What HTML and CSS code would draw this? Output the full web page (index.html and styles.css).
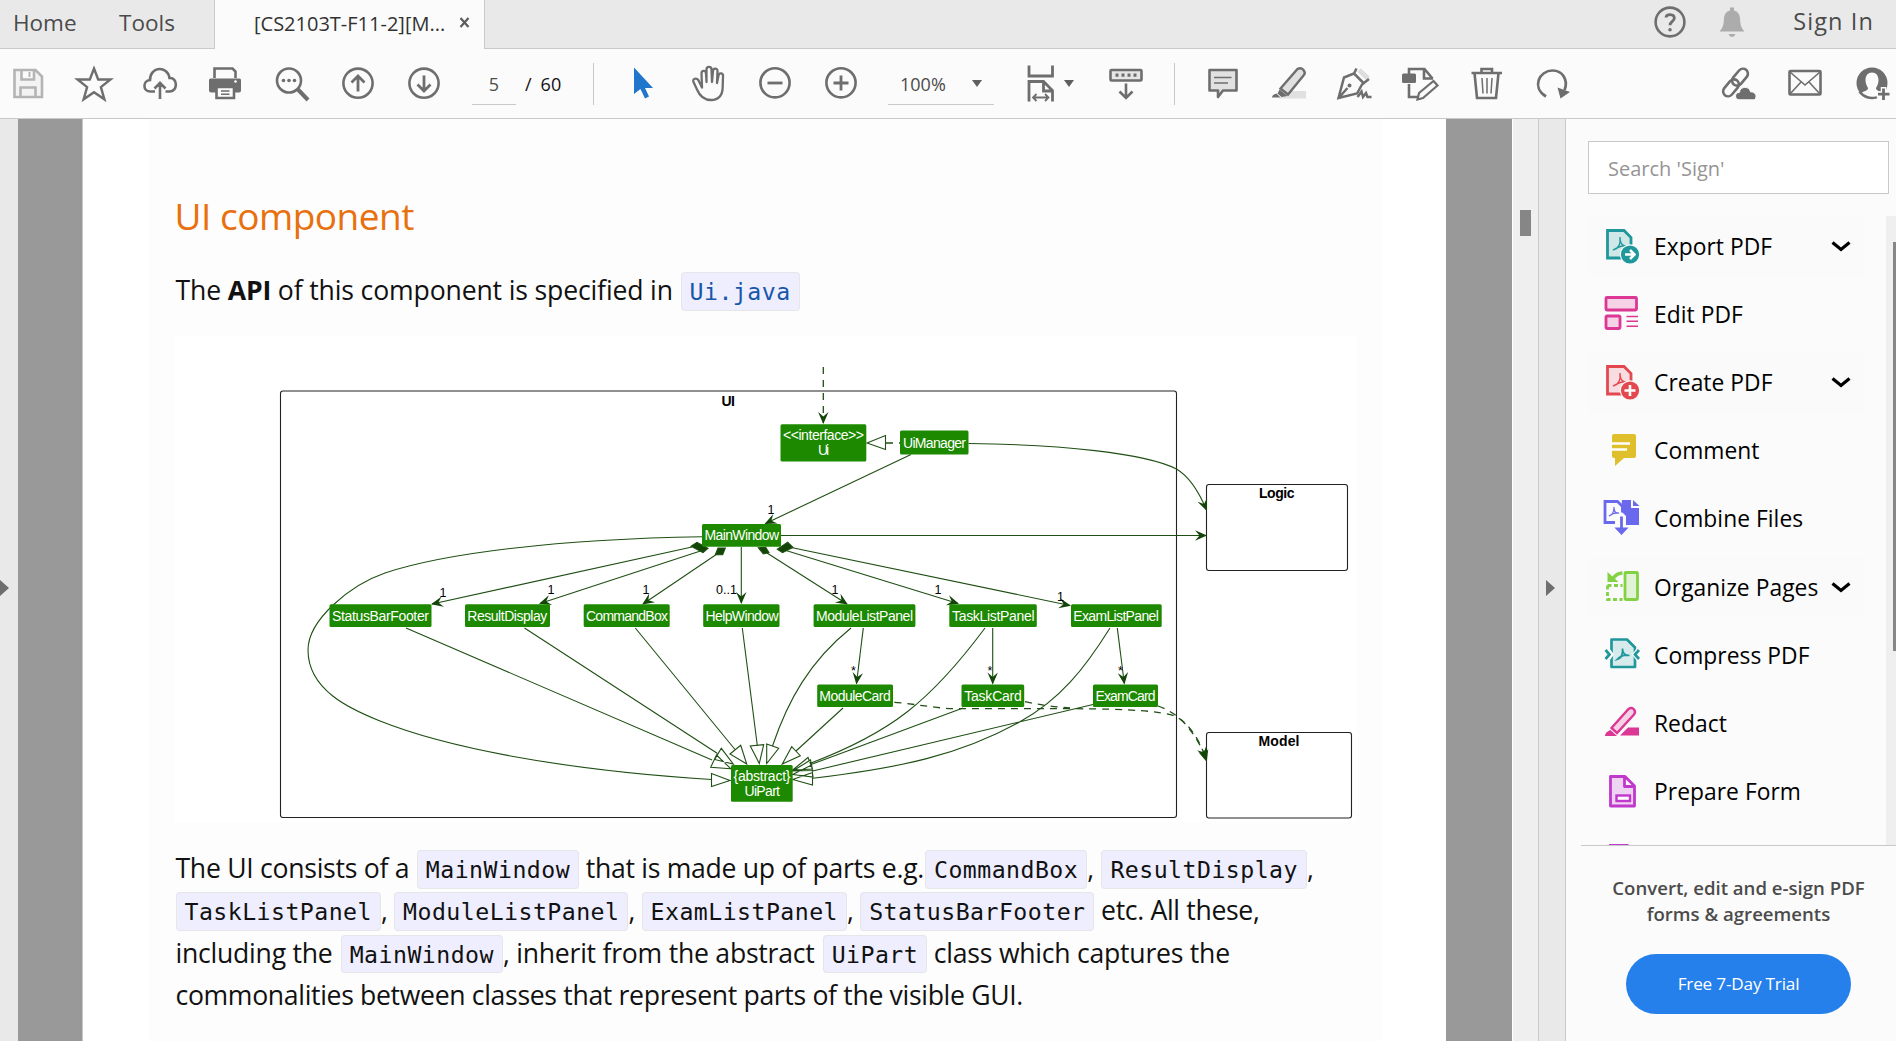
FILE: index.html
```html
<!DOCTYPE html>
<html lang="en">
<head>
<meta charset="utf-8">
<title>PDF Reader</title>
<link rel="stylesheet" href="styles.css">
</head>
<body>
<div class="app">
  <header class="tabs">
    <nav class="tabs-nav"><span class="tab-home">Home</span><span class="tab-tools">Tools</span></nav>
    <div class="tab-active"><span class="tab-title">[CS2103T-F11-2][M...</span>
      <svg class="tab-close" width="11" height="11" viewBox="0 0 11 11"><path d="M1.5 1l8 9M9.500 1l-8 9" stroke="#5c5c5c" stroke-width="2.200"/></svg>
    </div>
    <div class="tabs-right">
      <svg width="34" height="34" viewBox="-17 -17 34 34" fill="none" stroke="#6e6e6e"><circle r="14.400" stroke-width="2.600"/><path d="M-4-4.500C-4-8.500 4.300-8.500 4.300-3.800C4.300-.5 0-.8 0 3.300" stroke-width="2.800"/><circle cy="7.800" r="1" stroke-width="1.600"/></svg>
      <svg class="bell" width="28" height="32" viewBox="-14 -16 28 32" fill="#acacac"><path d="M-2-14.500h4v3c4 1 5.800 4 6 8c.3 6 1 9 4.500 13h-25c3.500-4 4.200-7 4.500-13c.2-4 2-7 6-8zM-3.500 12h7c-1 2-2 3-3.500 3s-2.500-1-3.500-3z"/></svg>
      <span class="signin">Sign In</span>
    </div>
  </header>

  <div class="toolbar">
    <div class="group group-file">
      <svg class="icon" viewBox="-20 -20 40 40" fill="none" stroke="#b4b4b4" stroke-width="2.600"><path d="M-13.500-14h21l6.500 6.500v20.500h-27.500zM-6.500-14v9.500h12.500v-9.500M-7.500 13v-9.500h15v9.500" fill="#f3f3f3"/><path d="M1.500-12v5" stroke-width="2"/></svg>
      <svg class="icon" viewBox="-20 -20 40 40" fill="none" stroke="#6e6e6e" stroke-width="2.400"><path d="M0-15.500l4.200 11h12.300l-9.600 7.600 3.500 12.200-10.400-7.100-10.400 7.100 3.500-12.200-9.600-7.600h12.300z"/></svg>
      <svg class="icon" viewBox="-20 -20 40 40" fill="none" stroke="#6e6e6e" stroke-width="2.600"><path d="M-5 7.500h-4.500c-8 0-8-11-.5-11.500c0-14 17.500-14.500 19.500-2c8.500-.5 8.500 13.500 0 13.500h-4M0 15v-15M-5.500 4.500l5.500-5.700 5.500 5.700"/></svg>
      <svg class="icon" viewBox="-19 -20 40 40" fill="none" stroke="#6e6e6e" stroke-width="2.600"><path d="M-10.500-6v-9.500h18l3 3v6.500"/><path d="M-14.500-5.500h29q1.500 0 1.500 1.500v10.500q0 2-2 2h-28q-2 0-2-2v-10.500q0-1.500 1.500-1.500z" fill="#6e6e6e" stroke="none"/><path d="M-8.500 3h17.500v11h-17.500z" fill="#fbfbfb"/><path d="M-4 7h8.500M-4 10.200h8.500" stroke-width="1.500"/><circle cx="10.500" cy="-2.500" r="1.300" fill="#fff" stroke="none"/></svg>
      <svg class="icon" viewBox="-20 -20 40 40" fill="none" stroke="#6e6e6e" stroke-width="2.600"><circle cx="-3" cy="-3.500" r="12"/><path d="M5.500 5l10.500 11" stroke-width="4"/><g fill="#6e6e6e" stroke="none"><circle cx="-8.500" cy="-3.500" r="1.800"/><circle cx="-3" cy="-3.500" r="1.800"/><circle cx="2.500" cy="-3.500" r="1.800"/></g></svg>
      <svg class="icon" viewBox="-20 -20 40 40" fill="none" stroke="#6e6e6e" stroke-width="2.600"><circle cy="-.8" r="14.600"/><path d="M0 7.500v-15M-6.500-1.500l6.500-6.500 6.500 6.500" stroke-width="2.800"/></svg>
      <svg class="icon" viewBox="-20 -20 40 40" fill="none" stroke="#6e6e6e" stroke-width="2.600"><circle cy="-.8" r="14.600"/><path d="M0-8.500v15M-6.500.5l6.500 6.500 6.500-6.500" stroke-width="2.800"/></svg>
    </div>
    <div class="page-number">5</div>
    <div class="page-total"><span>/</span><span>60</span></div>
    <div class="divider"></div>
    <div class="group group-view">
      <svg class="icon" viewBox="-20 -20 40 40" fill="#2075cd"><path d="M-9-16.500v26.500l6.500-5 4.500 9.500 4-2-4-8.500h8z"/></svg>
      <svg class="icon" viewBox="-20 -20 40 40" fill="none" stroke="#6e6e6e" stroke-width="2.300" stroke-linejoin="round" stroke-linecap="round"><path d="M-7 3.500l-.5-14c0-3.500 4.500-3.500 4.500 0l.5 8.500v-12.500c0-3.500 5-3.500 5 0l.5 12.500 1-11c.3-3.300 4.700-3 4.500 0l-.5 12 1.500-7.500c.8-3.200 5-2.500 4.500 1l-.3 10c0 9.500-4.500 13.500-11.700 13.500c-7.500 0-11.500-4.500-14-10.500l-3.500-7.500c-1.500-3.500 3-4.500 4.800-2z"/></svg>
      <svg class="icon" viewBox="-20 -20 40 40" fill="none" stroke="#6e6e6e" stroke-width="2.600"><circle cy="-1.200" r="14.600"/><path d="M-7.500-1h15" stroke-width="2.800"/></svg>
      <svg class="icon" viewBox="-20 -20 40 40" fill="none" stroke="#6e6e6e" stroke-width="2.600"><circle cy="-1.200" r="14.600"/><path d="M-7.500-1h15M0-8.500v15" stroke-width="2.800"/></svg>
    </div>
    <div class="zoom-select"><span>100%</span><i class="caret"></i></div>
    <svg class="icon icon-fit" viewBox="-20 -20 40 40" fill="none" stroke="#6e6e6e" stroke-width="2.800"><path d="M-12-18.500v10.500h23.500v-10.500M-12 17.500v-20h14.500l9 9v11M2.500-2.500v9.500h9"/><path d="M-8 13.500h15.500M-4.500 10l-3.500 3.500 3.500 3.500M4 10l3.500 3.500-3.500 3.500" stroke-width="1.800"/></svg>
    <i class="caret"></i>
    <svg class="icon icon-keys" viewBox="-20 -20 40 40" fill="none" stroke="#6e6e6e" stroke-width="2.600"><rect x="-15.500" y="-14" width="31" height="10.500" rx="1" fill="#e6e6e6"/><path d="M-10.500-8.800h21" stroke-dasharray="3 3" stroke-width="3.200"/><path d="M0-.5v14.500M-6.500 7.500l6.500 6.500 6.500-6.500"/></svg>
    <div class="divider"></div>
    <div class="group group-edit">
      <svg class="icon" viewBox="-20 -20 40 40" fill="#e1e1e1" stroke="#6e6e6e" stroke-width="2.600"><path d="M-13.500-14h27v20.500h-13.500l-5 6.500v-6.500h-8.500z" stroke-linejoin="round"/><path d="M-9-6.500h17.500M-9-1h14" stroke-width="1.700"/></svg>
      <svg class="icon" viewBox="-20 -20 40 40" fill="#e1e1e1" stroke="#6e6e6e" stroke-width="2.400"><path d="M-10 14.500h27v-7.500h-18z" stroke="none"/><path d="M-8.500 4.500l17-19.500q3.500-2 6 1t0 5.500l-15.500 19z"/><path d="M-9.500 5.500l8 6.500-6 1-4-3.500zM-12.500 9.500l4 4h-8.500q0-3 4.500-4z" fill="#6e6e6e" stroke="none"/></svg>
      <svg class="icon" viewBox="-20 -20 40 40" fill="none" stroke="#6e6e6e" stroke-width="2.500"><path d="M4-14l9 8.500" stroke="#dedede" stroke-width="5"/><path d="M1.500-15.500l-2.500 5-10 4-5.500 20.500 18.500-4.500 5-9 7-5.500M-1-10.500l10 10M-15.500 13l8-9"/><circle cx="-5.500" cy="1.500" r="2" fill="#6e6e6e" stroke="none"/><path d="M2.500 13l4-5.500 1.500 5.500 3-4 1.500 4h4"/></svg>
      <svg class="icon" viewBox="-20 -20 40 40" fill="none" stroke="#6e6e6e" stroke-width="2.600"><path d="M-12-10v-5h15.500l8 9.500M3-15v9.500h9M-12 0v13h10"/><rect x="-19" y="-10.500" width="14" height="9.500" rx="1.500" fill="#6e6e6e" stroke="none"/><path d="M-3.500 15.500l1.500-6.500 14.500-12 4 4.500-14.500 12.500z" stroke-width="2.200"/></svg>
      <svg class="icon" viewBox="-20 -20 40 40" fill="none" stroke="#6e6e6e" stroke-width="2.600"><path d="M-15.500-11h30.500M-12.500-11l2.500 25h19l2.500-25M-5.500-11v-4h10.500v4"/><path d="M-5-6l1 15.500M0-6v15.500M5-6l-1 15.500" stroke-width="1.500"/></svg>
      <svg class="icon" viewBox="-20 -20 40 40" fill="none" stroke="#6e6e6e" stroke-width="2.700"><path d="M-7 12.500c-15-9.500-6.500-26 6.500-26c10.500 0 16 10 12 19.500"/><path d="M4.500 3.500l12.500 4.500-9.500 6.500z" fill="#6e6e6e" stroke="none"/></svg>
    </div>
    <div class="group group-share">
      <svg class="icon" viewBox="-20 -20 40 40" fill="none" stroke="#6e6e6e" stroke-width="2.600"><g transform="translate(-2.500 -1.500) rotate(-50)"><rect x="-2.500" y="-5" width="19" height="10" rx="5"/><rect x="-16.500" y="-5" width="19" height="10" rx="5"/></g><path d="M1 15.800c-4.500-.5-5-7 .5-7.500c.5-6.500 10-6.500 11-.5c6.500 0 7 7.500 3 8z" fill="#6e6e6e" stroke="#fbfbfb" stroke-width="1"/></svg>
      <svg class="icon" viewBox="-20 -20 40 40" fill="none" stroke="#6e6e6e" stroke-width="2.600"><rect x="-15.500" y="-13" width="31" height="23.500" rx="1"/><path d="M-15-12l15 13 15-13M-15 10l11-12M15 10l-11-12" stroke-width="1.600"/></svg>
      <svg class="icon" viewBox="-20 -20 40 40"><circle cy="-1" r="15.500" fill="#6e6e6e"/><path d="M0-11.500c4 0 6.500 3 6.500 7.500c0 4-1.500 6-2.500 8c0 3 4 3 7 5v6h-22v-6c3-2 7-2 7-5c-1-2-2.500-4-2.500-8c0-4.500 2.500-7.500 6.500-7.500z" fill="#fbfbfb"/><path d="M-12.500 7.500a15 15 0 0 0 17.500 5.600" fill="none" stroke="#6e6e6e" stroke-width="2.500"/><path d="M11.500 3v14M4.500 10h14" stroke="#fbfbfb" stroke-width="5.500"/><path d="M11.500 4.500v11.500M6 10.200h11.500" stroke="#6e6e6e" stroke-width="2.800"/></svg>
    </div>
  </div>

  <div class="main">
    <div class="left-strip"><i class="tri tri-left"></i></div>
    <div class="desk desk-left"></div>
    <article class="page"><div class="sheet">
      <h1>UI component</h1>
      <p class="api">The <b>API</b> of this component is specified in <code class="link">Ui.java</code></p>
      <svg class="diagram" width="1183" height="486" viewBox="174 336 1183 486">
        <defs><marker id="arrow" markerUnits="userSpaceOnUse" markerWidth="14" markerHeight="14" orient="auto" overflow="visible"><path d="M1 0L-11-5.200L-6.500 0L-11 5.200z" fill="#124506" stroke="none"/></marker></defs>
        <g fill="none" stroke="#222" stroke-width="1.100">
          <rect x="280.500" y="391" width="896" height="426.500" rx="2.500"/>
          <rect x="1206.500" y="484.500" width="141" height="86" rx="2.500"/>
          <rect x="1206.500" y="732.500" width="145" height="85.500" rx="2.500"/>
        </g>
        <g class="edges">
          <path d="M968.500 443.500C1060 444.500 1145 453 1176.500 469C1190 477 1199 492 1206.500 510" marker-end="url(#arrow)"/>
          <path d="M911 454.500L765.500 523.500" marker-end="url(#arrow)"/>
          <path d="M781 535.500H1206" marker-end="url(#arrow)"/>
          <path d="M702 536.700C560 539 445 553 385 573C350 585 308 620 308 650C308 690 350 709 380 721C445 747 560 770 711.500 779.500"/>
          <path d="M692 547L432 604" marker-end="url(#arrow)"/>
          <path d="M702 550.500L540 603.500" marker-end="url(#arrow)"/>
          <path d="M717 554L643 604" marker-end="url(#arrow)"/>
          <path d="M741.300 547V603" marker-end="url(#arrow)"/>
          <path d="M767 553L847 604" marker-end="url(#arrow)"/>
          <path d="M786 550.500L958 603.500" marker-end="url(#arrow)"/>
          <path d="M790 547.200L1070 605.500" marker-end="url(#arrow)"/>
          <path d="M863.300 628L856.500 683.500" marker-end="url(#arrow)"/>
          <path d="M992.700 628V683.500" marker-end="url(#arrow)"/>
          <path d="M1117.300 628L1124.300 683.500" marker-end="url(#arrow)"/>
          <path d="M406 628L712 760M524.500 628L717.500 753.500M635.300 628L735 749.500M742.300 628L757.300 745.500M851 628C810 661 788 700 772.500 746M843 708L796 751M985 628C930 702 890 733 811 763M963 708L811 764.500M1093 704.500L812.700 771M1110 628C1085 668 1060 700 1020 721.700C960 755 900 768 812.700 778.300"/>
          <g stroke-dasharray="7 6" stroke-width="1.300">
            <path d="M823.300 367V423" marker-end="url(#arrow)"/>
            <path d="M894.300 702.300C915 704 935 708 953 708.700H1073C1130 709 1160 711 1175 716C1189 723 1200 740 1206.500 761" marker-end="url(#arrow)"/>
            <path d="M1025 701.700C1040 705 1055 707 1070 708"/>
            <path d="M1158 706C1180 714 1192 728 1206.500 758" marker-end="url(#arrow)"/>
            <path d="M886 443H900"/>
          </g>
          <path class="hollow" d="M867 443L885.500 435.500V449.500zM730 780.500L711.500 773.500V786.500z"/>
          <path d="M730.700 768.700L710.700 767.300L716.500 755zM733.300 764L721.300 748.300L714.700 759.500zM746.700 764L730 754L740.700 745.300zM759.300 763.500L750.300 746L763.700 744.700zM766.700 763.500V744L778.700 748.300zM782.300 764L791.700 746.700L800.300 755.700zM792.700 770L808 757.500L812.500 769zM792.700 771L810.500 760L812.700 770.500zM792.700 774.500L811.500 765L813 777zM792.700 779.500L812.500 772.500V785z"/>
          <path fill="#124506" d="M691 546.300L697 542.300L708 548.300L703 552.700zM715.300 554.700L718 548H725.300L722.700 554.700zM758.300 547.700L765.700 547.300L769 552.700L763.300 554zM777.300 549.300L787.700 542.300L793 547.300L782.500 552.700z"/>
        </g>
        <g fill="#1d8900">
          <rect x="780.500" y="424.300" width="85.800" height="37.200" rx="1.500"/>
          <rect x="900" y="430.500" width="68.500" height="24" rx="1.500"/>
          <rect x="702" y="524" width="79" height="22.800" rx="1.500"/>
          <rect x="329.500" y="604.300" width="102" height="22.800" rx="1.500"/>
          <rect x="465" y="604.300" width="85" height="22.800" rx="1.500"/>
          <rect x="583.700" y="604.300" width="86" height="22.800" rx="1.500"/>
          <rect x="703.200" y="604.300" width="76.300" height="22.800" rx="1.500"/>
          <rect x="813.600" y="604.300" width="101.800" height="22.800" rx="1.500"/>
          <rect x="949.300" y="604.300" width="87.500" height="22.800" rx="1.500"/>
          <rect x="1071" y="604.300" width="90.700" height="22.800" rx="1.500"/>
          <rect x="817.200" y="684.500" width="75.800" height="22.600" rx="1.500"/>
          <rect x="961.500" y="684.500" width="62.700" height="22.600" rx="1.500"/>
          <rect x="1093" y="684.500" width="65" height="22.600" rx="1.500"/>
          <rect x="731" y="765" width="61.700" height="36.700" rx="1.500"/>
        </g>
        <g class="node-text">
          <text x="783" y="440" textLength="81">&lt;&lt;interface&gt;&gt;</text>
          <text x="818" y="455.300" textLength="11">Ui</text>
          <text x="903" y="447.500" textLength="63">UiManager</text>
          <text x="704.500" y="540.300" textLength="74.500">MainWindow</text>
          <text x="332" y="620.700" textLength="97">StatusBarFooter</text>
          <text x="467.300" y="620.700" textLength="80">ResultDisplay</text>
          <text x="586" y="620.700" textLength="82">CommandBox</text>
          <text x="705.500" y="620.700" textLength="73">HelpWindow</text>
          <text x="816" y="620.700" textLength="97">ModuleListPanel</text>
          <text x="952" y="620.700" textLength="82.500">TaskListPanel</text>
          <text x="1073.300" y="620.700" textLength="85.500">ExamListPanel</text>
          <text x="819.300" y="701" textLength="71.500">ModuleCard</text>
          <text x="964.300" y="701" textLength="57.500">TaskCard</text>
          <text x="1095.500" y="701" textLength="60">ExamCard</text>
          <text x="733.500" y="781" textLength="57">{abstract}</text>
          <text x="744.500" y="795.700" textLength="35.500">UiPart</text>
        </g>
        <g class="frame-text">
          <text x="721.500" y="405.500" textLength="13.500">UI</text>
          <text x="1259" y="498.200" textLength="35.500">Logic</text>
          <text x="1258.500" y="745.800" textLength="41">Model</text>
        </g>
        <g class="count-text">
          <text x="767.500" y="513.500">1</text><text x="439.500" y="596.500">1</text><text x="547.500" y="594">1</text><text x="642.500" y="594">1</text>
          <text x="716" y="594.300">0..1</text><text x="831.500" y="594">1</text><text x="934.500" y="594">1</text><text x="1057" y="600.500">1</text>
          <text x="851" y="674.500">*</text><text x="987.500" y="674.500">*</text><text x="1118" y="674.500">*</text>
        </g>
      </svg>
      <p class="body"><span class="line-a">The UI consists of a <code>MainWindow</code> that is made up of parts e.g.<code>CommandBox</code>, <code>ResultDisplay</code>,</span><br>
<span class="line-b"><code>TaskListPanel</code>, <code>ModuleListPanel</code>, <code>ExamListPanel</code>, <code>StatusBarFooter</code> etc. All these,</span><br>
<span class="line-c">including the <code>MainWindow</code>, inherit from the abstract <code>UiPart</code> class which captures the</span><br>
commonalities between classes that represent parts of the visible GUI.</p>
    </div></article>
    <div class="desk desk-right"></div>
    <div class="doc-scroll"><i class="doc-thumb"></i></div>
    <div class="right-strip"><i class="tri tri-right"></i></div>
    <aside class="panel">
      <div class="search">Search 'Sign'</div>
      <div class="tools">
        <ul class="tool-list">
          <li class="more"><svg class="icon" viewBox="-20 -20 40 40" fill="#cfe7e7" stroke="#1f979b" stroke-width="2.800"><path d="M-14.500-15.500h16.500l7 7v20.500h-23.500z"/><path d="M-9 4c5-1 8-5 7-13c0 7 3 10 8 9c-5-1-10 1-15 4z" stroke-width="1.400" fill="none"/><circle cx="8" cy="8.500" r="10.300" fill="#fbfbfb" stroke="none"/><circle cx="8" cy="8.500" r="9.100" fill="#1f979b" stroke="none"/><path d="M3 8.500h8M8 4l4.500 4.500L8 13" stroke="#fff" stroke-width="2.500" fill="none"/></svg><span>Export PDF</span><svg class="chev" viewBox="0 0 24 14"><path d="M3.500 3.500L12 10.500L20.500 3.500"/></svg></li>
          <li><svg class="icon" viewBox="-20 -20 40 40" fill="#f6d2e7" stroke="#dc3794" stroke-width="2.800"><rect x="-16" y="-16.500" width="30.500" height="12.500" rx="1"/><rect x="-16" y="2" width="14" height="12.500" rx="1"/><path d="M4.500 2.500h11.500M4.500 7.300h11.500M4.500 12.200h11.500" stroke-width="1.600"/></svg><span>Edit PDF</span></li>
          <li class="more"><svg class="icon" viewBox="-20 -20 40 40" fill="#f9dcdf" stroke="#e34850" stroke-width="2.800"><path d="M-14.500-15.500h16.500l7 7v20.500h-23.500z"/><path d="M-9 4c5-1 8-5 7-13c0 7 3 10 8 9c-5-1-10 1-15 4z" stroke-width="1.400" fill="none"/><circle cx="8" cy="8.500" r="10.300" fill="#fbfbfb" stroke="none"/><circle cx="8" cy="8.500" r="9.100" fill="#e34850" stroke="none"/><path d="M2.500 8.500h11M8 3v11" stroke="#fff" stroke-width="2.600"/></svg><span>Create PDF</span><svg class="chev" viewBox="0 0 24 14"><path d="M3.500 3.500L12 10.500L20.500 3.500"/></svg></li>
          <li><svg class="icon" viewBox="-20 -20 40 40"><path d="M-14-17h26q2 0 2 2v20q0 2-2 2h-10l-9 8v-8h-1q-2 0-2-2v-20q0-2 2-2z" fill="#dfbf2c"/><path d="M-10-7.500h18M-10-1.500h15" stroke="#fff" stroke-width="2.400"/></svg><span>Comment</span></li>
          <li><svg class="icon" viewBox="-20 -20 40 40" fill="none" stroke="#6a68ec" stroke-width="2.800"><path d="M0-19h9v8h8v17h-13v-9l-5-5z" fill="#6a68ec" stroke="none"/><path d="M11-19l6.500 6h-6.500z" fill="#6a68ec" stroke="none"/><path d="M-7 3.500h-10v-21h12.500l5 5v6"/><path d="M-13-3c4-1 5-4 5-9c0 5 2 7 5 6c-3-.5-6 0-10 3z" stroke-width="1.200"/><path d="M-2.500-3v11h-6.500l8.500 9 8.500-9h-6.500v-11z" fill="#6a68ec" stroke="#fbfbfb" stroke-width="1.200"/></svg><span>Combine Files</span></li>
          <li class="more"><svg class="icon" viewBox="-20 -20 40 40" fill="none" stroke="#83d245" stroke-width="2.800"><rect x="3" y="-14.500" width="12.500" height="27" rx="1" fill="#e2f2d6"/><path d="M-14.500-1.500v14h15M-14.500-1.500h15" stroke-dasharray="4 2.500"/><path d="M.5-14c-5 0-7 2-9.500 5.500" stroke-width="3.400"/><path d="M-14.500-15v10h11z" fill="#83d245" stroke="none"/></svg><span>Organize Pages</span><svg class="chev" viewBox="0 0 24 14"><path d="M3.500 3.500L12 10.500L20.500 3.500"/></svg></li>
          <li><svg class="icon" viewBox="-20 -20 40 40" fill="#d8ebec" stroke="#1f979b" stroke-width="2.700"><path d="M-10.500-15.500h15.500l8 8v19.500h-23.500z" stroke-linejoin="round"/><path d="M-14-8.500l6 8-6 8zM16-8.500l-6 8 6 8z" fill="#fbfbfb" stroke="none"/><path d="M-16.500-5l4 4.500-4 4.500M17-5l-4 4.500 4 4.500" fill="none"/><path d="M-5 4.500c4-1 6-5 5.500-11c0 5 2.500 7 7 7c-4.500-1-8.500 0-12.500 4z" stroke-width="1.700" fill="none"/></svg><span>Compress PDF</span></li>
          <li><svg class="icon" viewBox="-20 -20 40 40" fill="#f6d2e7" stroke="#dc3794" stroke-width="2.400"><path d="M-10.500 5l17-19q3.500-2 5.500.5t0 5l-17 18.500z"/><path d="M-11.500 7l6.500 6h-12q0-4 5.500-6zM-2 12.500l8-8h11v8z" fill="#dc3794" stroke="none"/></svg><span>Redact</span></li>
          <li><svg class="icon" viewBox="-20 -20 40 40" fill="#efd3f3" stroke="#c038cc" stroke-width="2.800"><path d="M-11.500-15.500h14.500l9.500 9.500v20h-24zM2.500-15.500v10h10" stroke-linejoin="round"/><rect x="-5.500" y="3.500" width="13.500" height="5.500" fill="#fff" stroke-width="2.400"/></svg><span>Prepare Form</span></li>
          <li><svg class="icon" viewBox="-20 -20 40 40" fill="none" stroke="#c038cc" stroke-width="2.800"><path d="M-11.500 14v-28.500h17l7 7v21.500z"/></svg></li>
        </ul>
        <div class="panel-scroll"><i class="panel-thumb"></i></div>
      </div>
      <div class="promo">
        <p>Convert, edit and e-sign PDF<br>forms &amp; agreements</p>
        <div class="trial">Free 7-Day Trial</div>
      </div>
    </aside>
  </div>
</div>
</body>
</html>
```
FILE: styles.css
```css
* { box-sizing: border-box; }
body { margin: 0; font-family: "Open Sans", "Noto Sans", sans-serif; color: #111; overflow: hidden; }
.app { display: flex; flex-direction: column; width: 1896px; height: 1041px; overflow: hidden; background: #fbfbfb; }
svg { display: block; flex: none; }

/* tab bar */
.tabs { display: flex; height: 49px; flex: none; background: #e9e9e9; color: #4b4b4b; font-size: 22.5px; line-height: 45px; }
.tabs-nav { display: flex; width: 214px; padding-left: 13px; border-bottom: 1px solid #c9c9c9; }
.tab-home { width: 106px; }
.tab-active { display: flex; align-items: center; width: 271px; padding-left: 39px; background: #fbfbfb; border: solid #c9c9c9; border-width: 0 1px; color: #323232; font-size: 20px; line-height: 45px; }
.tab-title { width: 205px; padding-bottom: 3px; }
.tab-close { margin-bottom: 4px; }
.tabs-right { display: flex; flex: 1; justify-content: flex-end; align-items: center; padding: 0 22px 5px 0; border-bottom: 1px solid #c9c9c9; }
.bell { margin: 0 47px 0 31px; }
.signin { font-size: 23.5px; letter-spacing: 1.1px; }

/* toolbar */
.toolbar { display: flex; align-items: center; height: 70px; flex: none; border-bottom: 1px solid #c9c9c9; font-size: 18px; color: #4b4b4b; overflow: hidden; }
.toolbar > * { flex: none; }
.icon { width: 40px; height: 40px; }
.group { display: flex; }
.group .icon { margin: 0 13px; }
.group-file { margin-left: -5px; width: 462px; }
.page-number { width: 44px; height: 42px; margin: 1px 0 0 15px; border-bottom: 1px solid #c9c9c9; line-height: 42px; text-align: center; }
.page-total { display: flex; gap: 9px; margin-left: 9px; width: 68px; color: #111; }
.divider { width: 1px; height: 42px; background: #c9c9c9; }
.group-view { margin-left: 16px; }
.zoom-select { display: flex; align-items: center; justify-content: space-between; width: 106px; height: 42px; margin: 1px 0 0 14px; padding: 0 12px; border-bottom: 1px solid #c9c9c9; }
.caret { width: 10px; height: 7px; background: #5f5f5f; clip-path: polygon(0 0, 100% 0, 50% 100%); }
.icon-fit { margin: 0 3px 0 27px; }
.icon-keys { margin: 0 28px 0 32px; }
.group-edit { margin-left: 15px; }
.group-share { margin-left: 118px; }
.group-share .icon { margin: 0 13.500px; }

/* document area */
.main { display: flex; flex: 1; min-height: 0; }
.left-strip, .right-strip { display: flex; align-items: center; background: #e9e9e9; flex: none; padding-top: 16px; }
.left-strip { width: 18px; }
.right-strip { border: solid #c9c9c9; border-width: 0 1px; width: 28px; padding-left: 7px; }
.tri { width: 9px; height: 16px; background: #6e6e6e; clip-path: polygon(0 0, 100% 50%, 0 100%); }
.desk { background: #999; flex: none; }
.desk-left { width: 65px; border-right: 1px solid #c9c9c9; }
.desk-right { width: 66px; }
.doc-scroll { width: 26px; flex: none; background: #efefef; border-left: 1px solid #fff; padding: 91px 0 0 7px; }
.doc-thumb { display: block; width: 11px; height: 26px; background: #868686; }
.page { width: 1363px; flex: none; background: #fff; padding: 0 63px 0 66px; overflow: hidden; }
.sheet { height: 100%; padding-left: 26.500px; background: #fdfdfd; overflow: hidden; }
h1 { margin: 71.500px 0 28.600px -1px; font-size: 37px; font-weight: 400; line-height: 50px; letter-spacing: -.5px; color: #e8700f; }
.sheet p { margin: 0; font-size: 26.6px; line-height: 42.3px; letter-spacing: -.33px; white-space: nowrap; }
.sheet .api { letter-spacing: -.15px; }
.line-a { letter-spacing: -.28px; }
.line-c { letter-spacing: -.24px; }
code { font-family: "DejaVu Sans Mono", monospace; font-size: 23.2px; line-height: 1; letter-spacing: .46px; padding: 5px 8px 4.500px; margin-left: 1px; border: 1px solid #e6e6e8; border-radius: 4px; background: #eef; }
.line-b code { margin-left: 0; }
.line-c code { margin-left: 1.500px; }
.link { color: #1756a9; }
.diagram { margin: 24.400px 0 25.300px -1.500px; background: #fff; }
.edges { fill: none; stroke: #1f4f14; stroke-width: 1.1; }
.edges .hollow { fill: #fff; }
.diagram text { font-family: "Liberation Sans", Arial, sans-serif; font-size: 14px; }
.node-text { fill: #fff; }
.frame-text { font-weight: 700; fill: #000; }
.diagram .count-text text { font-size: 12.500px; }

/* tools panel */
.panel { display: flex; flex-direction: column; flex: 1; min-width: 0; background: #fbfbfb; }
.search { height: 53px; flex: none; margin: 22px 7px 18px 22px; padding-left: 19px; border: 1px solid #c9c9c9; background: #fff; color: #959595; font-size: 20px; line-height: 54px; }
.tools { display: flex; height: 634px; flex: none; margin-left: 15px; border-bottom: 1px solid #c9c9c9; overflow: hidden; }
.tool-list { flex: 1; margin: 0; padding: 0 0 0 7px; list-style: none; }
.tool-list li { display: flex; align-items: center; width: 275px; height: 60.200px; margin: 4px 0 8px; padding-left: 14px; font-size: 22.8px; letter-spacing: .05px; color: #000; }
.tool-list li span { flex: 1; margin-left: 12px; white-space: nowrap; }
.more { background: #fafafa; }
.chev { width: 24px; height: 14px; margin-right: 10px; fill: none; stroke: #000; stroke-width: 3.2; }
.panel-scroll { width: 10px; margin-top: 4px; padding: 26px 0 0 7px; background: #efefef; }
.panel-thumb { display: block; height: 409px; background: #868686; }
.promo { display: flex; flex-direction: column; align-items: center; padding: 29px 0 0 15px; }
.promo p { margin: 0 0 28px; font-size: 18.6px; font-weight: 600; line-height: 25.500px; text-align: center; color: #4b4b4b; }
.trial { width: 225px; height: 60px; border-radius: 30px; background: #2680eb; color: #fff; text-align: center; font-size: 17.2px; line-height: 60px; letter-spacing: -.2px; }
```
